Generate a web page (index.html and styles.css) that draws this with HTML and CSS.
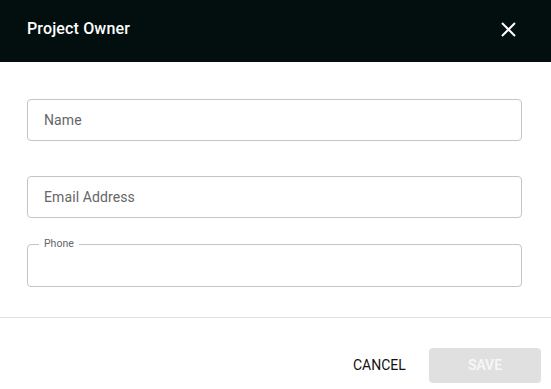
FILE: index.html
```html
<!DOCTYPE html>
<html>
<head>
<meta charset="utf-8">
<link rel="stylesheet" href="styles.css">
</head>
<body>
<div class="dialog">
  <header class="head">
    <h2 class="title">Project Owner</h2>
    <button class="close" aria-label="close">
      <svg width="15" height="15" viewBox="0 0 15 15"><path d="M1 1L14 14M14 1L1 14" stroke="#fff" stroke-width="2" fill="none"/></svg>
    </button>
  </header>
  <div class="body">
    <div class="field"><span class="ph">Name</span></div>
    <div class="field"><span class="ph">Email Address</span></div>
    <fieldset class="field notched"><legend class="legend">Phone</legend></fieldset>
  </div>
  <footer class="foot">
    <button class="btn cancel">CANCEL</button>
    <button class="btn save">SAVE</button>
  </footer>
</div>
</body>
</html>
```
FILE: styles.css
```css
* { box-sizing: border-box; }
html, body { margin: 0; padding: 0; background: #fff; }
body { font-family: Roboto, "Noto Sans", sans-serif; }
.dialog { width: 551px; height: 389px; display: flex; flex-direction: column; }
.head {
  height: 62px; background: #030e0e; display: flex; align-items: center;
  justify-content: space-between; padding: 0 33px 0 27px; flex: none;
}
.title { margin: 0; color: #fff; font-size: 16px; font-weight: 500; line-height: 20px; margin-top: -5px; letter-spacing: 0.15px; }
.close { background: none; border: 0; padding: 0; width: 20px; height: 20px; display: flex; align-items: center; justify-content: center; cursor: pointer; margin-top: -4px; }
.body { padding: 37px 29px 0 27px; display: flex; flex-direction: column; flex: none; height: 256px; border-bottom: 1px solid #e0e0e0; }
.field {
  height: 42px; border: 1px solid #c4c4c4; border-radius: 4px; display: flex; align-items: center;
  padding: 0 16px 1px; margin: 0 0 35px 0;
}
.field:nth-child(2) { margin-bottom: 26px; }
.ph { color: #666; font-size: 14px; letter-spacing: 0.1px; }
.notched { display: block; margin: 0; padding: 0 16px 0 11px; height: 48px; margin-top: -5px; }
.legend { font-size: 10.5px; color: #666; padding: 0 5px; line-height: 10px; margin-top: -1px; }
.foot { display: flex; justify-content: flex-end; align-items: center; padding: 23px 10px 0 0; gap: 10px; flex: 1; }
.btn { font-family: Roboto, sans-serif; font-size: 14px; font-weight: 400; border: 0; border-radius: 4px; height: 35px; padding: 0 14px; background: none; cursor: pointer; }
.cancel { color: #111; width: 80px; }
.save { background: #e0e0e0; color: #f8f8f8; width: 112px; font-weight: 500; }
```
